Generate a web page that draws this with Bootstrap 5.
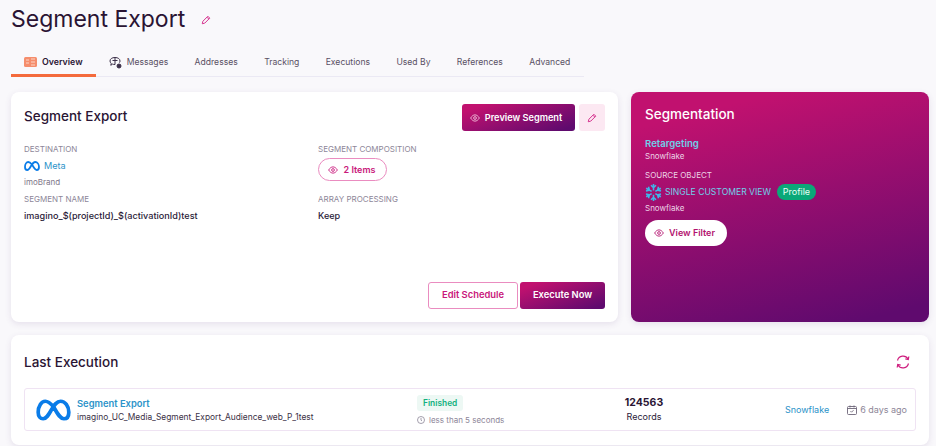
<!DOCTYPE html>
<html lang="en">
<head>
<meta charset="utf-8">
<title>Segment Export</title>
<link href="https://cdn.jsdelivr.net/npm/bootstrap@5.3.0/dist/css/bootstrap.min.css" rel="stylesheet">
<style>
html,body{height:446px;overflow:hidden}
body{background:#f9f8fb;font-family:"Inter","Liberation Sans",sans-serif;color:#2a1a38;font-size:9.5px}
.pg{padding:0 7px 0 11px}
.ttl{font-size:23px;line-height:30px;font-weight:400;margin:0;padding-top:4px;color:#2a1433}
.ttl-row{height:44px}
.pen{color:#d6338f;margin-top:15px}
.tabs{width:573px;height:31px;margin-top:2px;border-bottom:1px solid #ebe9f4;flex-wrap:nowrap}
.tabs .nav-link{padding:3px 13.2px 0;height:31px;margin-bottom:-1px;font-size:8.6px;color:#5a5064;display:flex;align-items:center;gap:5px;border-bottom:2px solid transparent;border-radius:0;white-space:nowrap}
.tabs .nav-link.active{color:#2a1433;font-weight:600;font-size:8.8px;border-bottom:3px solid #f46a3c;padding-left:13px;padding-right:13px}
.top{margin-top:15px;height:230px;gap:13px}
.pan{background:#fff;border:0;border-radius:8px;box-shadow:0 2px 6px rgba(90,60,120,.12)}
.left{width:607px;padding:12px 13px 13px}
.h5x{font-size:13.5px;font-weight:500;color:#2a1433;margin:0;line-height:16px}
.grad{background:linear-gradient(160deg,#c1116f 12%,#5f0a6e 92%);color:#fff;border:0}
.btn-prev{height:27px;width:113px;font-size:9.2px;font-weight:600;padding:0 5px 0 0;border-radius:3px;display:flex;align-items:center;justify-content:center;gap:5px}
.btn-pen{width:26px;height:27px;background:#fce8f2;color:#d6338f;padding:0;border:0;border-radius:3px;display:flex;align-items:center;justify-content:center}
.lab{font-size:8px;color:#8d8698;text-transform:uppercase;line-height:10px}
.val{font-size:9.1px;color:#2a1a38;line-height:12px}
.link{color:#2b93c9;text-decoration:none}
.sub{font-size:8px;color:#7e7789;line-height:10px;margin-top:3px}
.pill{display:inline-flex;align-items:center;justify-content:center;gap:6px;width:69px;height:23px;border:1px solid #ea8cc0;border-radius:12px;color:#c9177b;font-weight:600;font-size:9px;margin-top:4px;background:#fff;padding:0 2px 0 0}
.fld{flex:0 0 294px}
.row1{margin-top:13px}
.row2{margin-top:7px}
.valgap{margin-top:6px}
.meta-line{height:16px;margin-top:4px}
.act-gap{gap:2px}
.btn-edit{width:90px;height:27px;border:1px solid #ea8cc0;background:#fff;color:#c9177b;font-size:9.4px;font-weight:600;padding:0;border-radius:3px}
.btn-exec{width:85px;height:27px;font-size:9.4px;font-weight:600;padding:0;border-radius:3px}
.right{width:298px;height:230px;border-radius:8px;padding:14px 14px;color:#fff;box-shadow:0 2px 6px rgba(90,60,120,.12);background:linear-gradient(166deg,#c1116f 12%,#5f0a6e 94%)}
.right .h5x{color:#fff}
.cy{color:#6fd0ea}
.rt{font-size:9.6px;line-height:12px;font-weight:600;margin-top:16px}
.lt{font-size:8px;color:#ecd3e6;line-height:10px}
.lt1{margin-top:1px}
.lt2{margin-top:9px}
.lt3{margin-top:2px}
.scv{margin-top:3px;height:18px;gap:3px}
.scv-t{font-size:8.6px}
.tagp{background:#0aa878;color:#eafff6;border-radius:9px;width:39px;height:16px;font-size:9px;display:flex;align-items:center;justify-content:center;margin-left:3px}
.btn-vf{width:82px;height:26px;border-radius:13px;background:#fff;color:#b3126f;font-size:9px;font-weight:600;border:0;padding:0 3px 0 0;display:flex;align-items:center;justify-content:center;gap:5px;margin-top:7px}
.bot{margin-top:13px;height:110px;padding:16px 13px 0;border-radius:8px}
.bot-h{height:22px}
.ref-ic{margin-right:5px}
.exec{height:43px;margin-top:15px;border:1px solid #efe3f3;border-radius:3px;padding:0 8px 0 11px}
.c1{width:381px;gap:6px}
.c1-t{font-size:9.4px;line-height:12px;padding-top:1px}
.c1-s{font-size:8.4px;line-height:10px;margin-top:2px;color:#3b3146}
.c2{width:182px}
.c2-s{line-height:10px;margin-top:4px;font-size:7.3px}
.c3{width:90px;text-align:center}
.fin{display:inline-block;background:#edf8f4;color:#13b17f;font-weight:600;font-size:8.4px;line-height:16px;padding:0 6px;border-radius:3px}
.mut{color:#8d8698;font-size:8px}
.num{font-weight:700;font-size:10.5px;line-height:13px;color:#2a1433}
.rec{font-size:9px;line-height:12px;margin-top:2px}
.side-info{gap:18px}
.snow{font-size:9px}
.ago{font-size:9px;gap:3px}
</style>
</head>
<body>
<div class="pg">
  <div class="ttl-row d-flex align-items-start gap-3">
    <h1 class="ttl">Segment Export</h1>
    <svg class="pen" width="10" height="10" viewBox="0 0 16 16" fill="none" stroke="currentColor" stroke-width="1.6"><path d="M2 14l1-4 8-8 3 3-8 8z"/><path d="M9.5 3.5l3 3"/></svg>
  </div>
  <ul class="nav tabs">
    <li class="nav-item"><a class="nav-link active" href="#"><svg width="13" height="10" viewBox="0 0 13 10"><rect width="13" height="10" rx="1.5" fill="#f58d6c"/><path d="M2 3h3M2 6h3M7 2h4M7 5h4M7 8h4" stroke="#fcd5c6" stroke-width="1"/></svg>Overview</a></li>
    <li class="nav-item"><a class="nav-link" href="#"><svg width="13" height="13" viewBox="0 0 13 13" fill="none" stroke="#3b2f48" stroke-width="1"><path d="M6 1.500c3 0 5 1.400 5 3.500 0 .6-.2 1.200-.5 1.600M6 8.500c-1 0-1.800-.1-2.500-.4L1.800 9.300l.4-2C1.400 6.700 1 6 1 5c0-2.100 2-3.500 5-3.500z"/><path d="M3.500 4.500h5"/><circle cx="10" cy="10" r="2" fill="#3b2f48"/></svg>Messages</a></li>
    <li class="nav-item"><a class="nav-link" href="#">Addresses</a></li>
    <li class="nav-item"><a class="nav-link" href="#">Tracking</a></li>
    <li class="nav-item"><a class="nav-link" href="#">Executions</a></li>
    <li class="nav-item"><a class="nav-link" href="#">Used By</a></li>
    <li class="nav-item"><a class="nav-link" href="#">References</a></li>
    <li class="nav-item"><a class="nav-link" href="#">Advanced</a></li>
  </ul>
  <div class="top d-flex">
    <section class="pan left d-flex flex-column">
      <div class="d-flex justify-content-between align-items-start">
        <h2 class="h5x mt-1">Segment Export</h2>
        <div class="d-flex gap-1">
          <button class="btn grad btn-prev"><svg width="10" height="8" viewBox="0 0 16 12" fill="none" stroke="#f3c5dd" stroke-width="1.400"><path d="M1 6c2-3.300 4.500-5 7-5s5 1.700 7 5c-2 3.300-4.500 5-7 5S3 9.300 1 6z"/><circle cx="8" cy="6" r="2.200"/></svg>Preview Segment</button>
          <button class="btn btn-pen" aria-label="Edit"><svg width="10" height="10" viewBox="0 0 16 16" fill="none" stroke="currentColor" stroke-width="1.600"><path d="M2 14l1-4 8-8 3 3-8 8z"/><path d="M9.500 3.500l3 3"/></svg></button>
        </div>
      </div>
      <div class="d-flex row1">
        <div class="fld">
          <div class="lab">Destination</div>
          <div class="d-flex align-items-center gap-1 meta-line">
            <svg width="16" height="10" viewBox="0 0 32 20" fill="none" stroke="#0a7ce8" stroke-width="3.600"><path d="M16 7C13 3.500 11 2 8.500 2 5 2 2 6.500 2 12c0 4 2 6 4.500 6 3 0 5-3.500 7.500-8 3-5 5-8 8.500-8 4 0 7.500 4.500 7.500 10 0 4-1.500 6-4.500 6-3 0-5-3-9.500-11z"/></svg>
            <a class="val link" href="#">Meta</a>
          </div>
          <div class="sub">imoBrand</div>
        </div>
        <div class="fld">
          <div class="lab">Segment Composition</div>
          <button class="pill"><svg width="10" height="8" viewBox="0 0 16 12" fill="none" stroke="currentColor" stroke-width="1.400"><path d="M1 6c2-3.300 4.500-5 7-5s5 1.700 7 5c-2 3.300-4.500 5-7 5S3 9.300 1 6z"/><circle cx="8" cy="6" r="2.200"/></svg>2 Items</button>
        </div>
      </div>
      <div class="d-flex row2">
        <div class="fld"><div class="lab">Segment Name</div><div class="val fw-medium valgap">imagino_$(projectId)_$(activationId)test</div></div>
        <div class="fld"><div class="lab">Array Processing</div><div class="val fw-medium valgap">Keep</div></div>
      </div>
      <div class="d-flex justify-content-end act-gap mt-auto">
        <button class="btn btn-edit">Edit Schedule</button>
        <button class="btn grad btn-exec">Execute Now</button>
      </div>
    </section>
    <aside class="right">
      <h2 class="h5x">Segmentation</h2>
      <div class="cy rt">Retargeting</div>
      <div class="lt lt1">Snowflake</div>
      <div class="lt lt2 text-uppercase">Source Object</div>
      <div class="d-flex align-items-center scv">
        <svg width="17" height="17" viewBox="0 0 24 24" fill="none" stroke="#3fb6ea" stroke-width="2.200"><defs><path id="arm" d="M12 9V0M8.500 1.800L12 5.300l3.500-3.500"/></defs><use href="#arm"/><use href="#arm" transform="rotate(60 12 12)"/><use href="#arm" transform="rotate(120 12 12)"/><use href="#arm" transform="rotate(180 12 12)"/><use href="#arm" transform="rotate(240 12 12)"/><use href="#arm" transform="rotate(300 12 12)"/></svg>
        <span class="cy scv-t">SINGLE CUSTOMER VIEW</span>
        <span class="tagp">Profile</span>
      </div>
      <div class="lt lt3">Snowflake</div>
      <button class="btn-vf"><svg width="10" height="8" viewBox="0 0 16 12" fill="none" stroke="currentColor" stroke-width="1.400"><path d="M1 6c2-3.300 4.500-5 7-5s5 1.700 7 5c-2 3.300-4.500 5-7 5S3 9.300 1 6z"/><circle cx="8" cy="6" r="2.200"/></svg>View Filter</button>
    </aside>
  </div>
  <section class="pan bot">
    <div class="d-flex justify-content-between align-items-center bot-h">
      <h2 class="h5x">Last Execution</h2>
      <svg class="ref-ic" width="16" height="16" viewBox="0 0 16 16" fill="none" stroke="#cf1f7f" stroke-width="1.200"><path d="M2.500 6.500A5.700 5.700 0 0 1 13 5"/><path d="M13.500 9.500A5.700 5.700 0 0 1 3 11"/><path d="M13.800 2.500L13.300 5.500l-3-.7M2.200 13.500l.5-3 3 .7"/></svg>
    </div>
    <div class="exec d-flex align-items-center">
      <div class="c1 d-flex align-items-center">
        <svg width="35" height="22" viewBox="0 0 32 20" fill="none" stroke="#0a7ce8" stroke-width="3.400"><path d="M16 7C13 3.500 11 2 8.500 2 5 2 2 6.500 2 12c0 4 2 6 4.500 6 3 0 5-3.500 7.500-8 3-5 5-8 8.500-8 4 0 7.500 4.500 7.500 10 0 4-1.500 6-4.500 6-3 0-5-3-9.500-11z"/></svg>
        <div>
          <a class="link fw-semibold d-block c1-t" href="#">Segment Export</a>
          <div class="c1-s">imagino_UC_Media_Segment_Export_Audience_web_P_1test</div>
        </div>
      </div>
      <div class="c2">
        <span class="fin">Finished</span>
        <div class="mut d-flex align-items-center gap-1 c2-s">
          <svg width="8" height="8" viewBox="0 0 8 8" fill="none" stroke="#8d8698" stroke-width=".8"><circle cx="4" cy="4" r="3.500"/><path d="M4 2v2.200l1 .7"/></svg>less than 5 seconds</div>
      </div>
      <div class="c3"><div class="num">124563</div><div class="rec">Records</div></div>
      <div class="ms-auto d-flex align-items-center side-info">
        <a class="link snow" href="#">Snowflake</a>
        <span class="mut d-flex align-items-center ago"><svg width="10" height="10" viewBox="0 0 10 10" fill="none" stroke="#6d6578" stroke-width=".9"><rect x=".5" y="1.500" width="9" height="8" rx="1"/><path d="M.5 3.500h9M3 .5v2M7 .5v2M3.500 6.200l1 1 2-2"/></svg>6 days ago</span>
      </div>
    </div>
  </section>
</div>
<script src="https://cdn.jsdelivr.net/npm/bootstrap@5.3.0/dist/js/bootstrap.bundle.min.js"></script>
</body>
</html>
